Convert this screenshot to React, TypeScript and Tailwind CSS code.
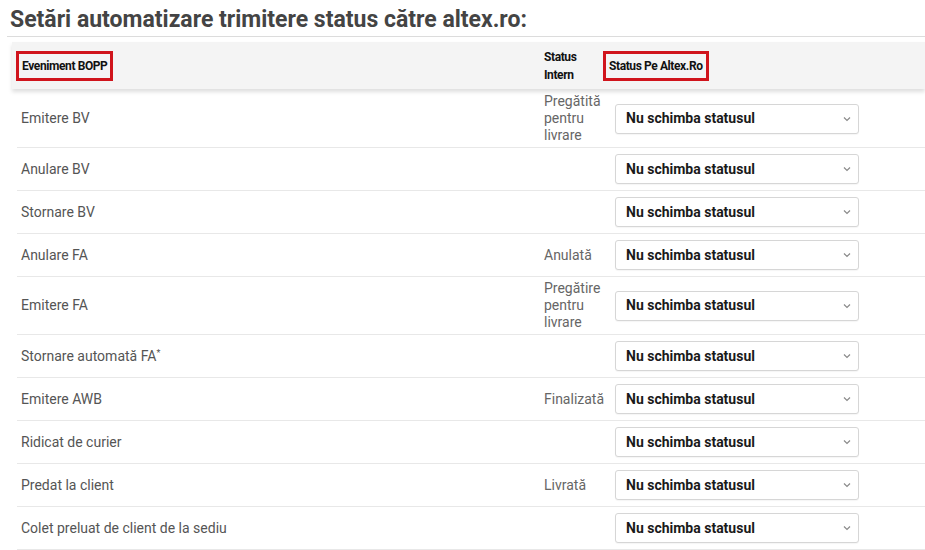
const rows: { event: string; status?: string; star?: boolean }[] = [
  { event: "Emitere BV", status: "Pregătită pentru livrare" },
  { event: "Anulare BV" },
  { event: "Stornare BV" },
  { event: "Anulare FA", status: "Anulată" },
  { event: "Emitere FA", status: "Pregătire pentru livrare" },
  { event: "Stornare automată FA", star: true },
  { event: "Emitere AWB", status: "Finalizată" },
  { event: "Ridicat de curier" },
  { event: "Predat la client", status: "Livrată" },
  { event: "Colet preluat de client de la sediu" },
];

function StatusSelect() {
  return (
    <div className="flex h-[30px] w-[244px] items-center justify-between rounded-[3px] border border-[#d6d6d6] bg-white pl-[10px] pr-[6px] shadow-[0_1px_1px_rgba(0,0,0,0.04)]">
      <span className="text-[14px] font-bold text-[#1a1a1a]">Nu schimba statusul</span>
      <svg width="10" height="10" viewBox="0 0 10 10" className="text-[#8a8a8a]">
        <path d="M2 3.5 L5 6.5 L8 3.5" fill="none" stroke="currentColor" strokeWidth="1.2" />
      </svg>
    </div>
  );
}

export default function App() {
  return (
    <div className="h-[550px] w-[925px] overflow-hidden bg-white font-['Roboto',sans-serif]">
      <h2 className="ml-[10px] pt-[6px] text-[23px] leading-[28px] font-bold text-[#444]">
        Setări automatizare trimitere status către altex.ro:
      </h2>
      <div className="ml-[7px] mt-[2px] border-t border-[#dcdcdc]" />

      {/* table header */}
      <div className="ml-[12px] mt-[5px] flex h-[47px] items-center bg-[#f4f4f4] shadow-[0_3px_4px_rgba(0,0,0,0.13)] text-[12px] font-bold tracking-[-0.4px] text-[#111]">
        <div className="ml-[4px] w-[528px]">
          <span className="inline-block border-[3px] border-[#d0141c] px-[3px] py-[4px] leading-[16px]">
            Eveniment BOPP
          </span>
        </div>
        <div className="w-[59px] leading-[18px]">
          Status
          <br />
          Intern
        </div>
        <span className="inline-block border-[3px] border-[#d0141c] px-[3px] py-[4px] leading-[16px]">
          Status Pe Altex.Ro
        </span>
      </div>

      <div className="ml-[17px] mt-[1px]">
        {rows.map((r) => (
          <div
            key={r.event}
            className="grid min-h-[43px] grid-cols-[527px_71px_1fr] items-center border-b border-[#e8e8e8] py-[3px] text-[14px]"
          >
            <div className="pl-[4px] text-[#555]">
              {r.event}
              {r.star && <sup className="text-[9px]">*</sup>}
            </div>
            <div className="pr-[4px] leading-[17px] text-[#666]">{r.status}</div>
            <StatusSelect />
          </div>
        ))}
      </div>
    </div>
  );
}
